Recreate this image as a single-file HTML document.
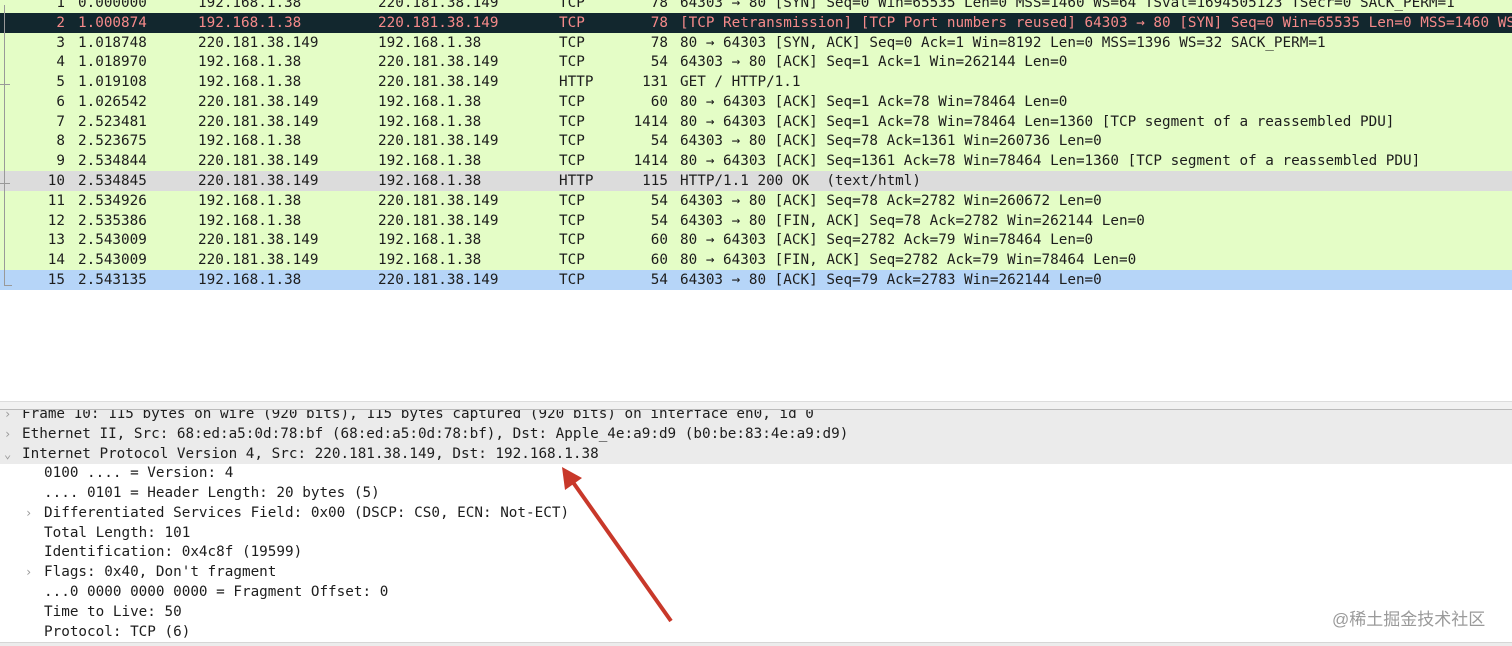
<!DOCTYPE html>
<html><head><meta charset="utf-8"><style>
*{margin:0;padding:0;box-sizing:border-box}
body{width:1512px;height:646px;overflow:hidden;background:#fff;font-family:"DejaVu Sans Mono","Liberation Mono",monospace;font-size:14.3px;color:#1d1d1d;position:relative}
.r{position:absolute;left:0;width:1512px;height:20px;line-height:21px;white-space:pre;background:#e4fdc6}
.r span{position:absolute;top:0}
.n{right:1447px;text-align:right}
.t{left:78px}.s{left:198px}.d{left:378px}.p{left:559px}.l{right:844px;text-align:right}.i{left:680px}
.blk{background:#12272e;color:#f58a8a}
.sel{background:#dcdcdc}
.blu{background:#b6d5f8}
.dr{position:absolute;left:0;width:1512px;height:20px;line-height:21px;white-space:pre}
.g{background:#ebebeb}
.ch{position:absolute;color:#999;font-size:12px}
</style></head><body>
<div class="r" style="top:-7px"><span class="n">1</span><span class="t">0.000000</span><span class="s">192.168.1.38</span><span class="d">220.181.38.149</span><span class="p">TCP</span><span class="l">78</span><span class="i">64303 → 80 [SYN] Seq=0 Win=65535 Len=0 MSS=1460 WS=64 TSval=1694505123 TSecr=0 SACK_PERM=1</span></div>
<div class="r blk" style="top:13px"><span class="n">2</span><span class="t">1.000874</span><span class="s">192.168.1.38</span><span class="d">220.181.38.149</span><span class="p">TCP</span><span class="l">78</span><span class="i">[TCP Retransmission] [TCP Port numbers reused] 64303 → 80 [SYN] Seq=0 Win=65535 Len=0 MSS=1460 WS=64</span></div>
<div class="r" style="top:33px"><span class="n">3</span><span class="t">1.018748</span><span class="s">220.181.38.149</span><span class="d">192.168.1.38</span><span class="p">TCP</span><span class="l">78</span><span class="i">80 → 64303 [SYN, ACK] Seq=0 Ack=1 Win=8192 Len=0 MSS=1396 WS=32 SACK_PERM=1</span></div>
<div class="r" style="top:52px"><span class="n">4</span><span class="t">1.018970</span><span class="s">192.168.1.38</span><span class="d">220.181.38.149</span><span class="p">TCP</span><span class="l">54</span><span class="i">64303 → 80 [ACK] Seq=1 Ack=1 Win=262144 Len=0</span></div>
<div class="r" style="top:72px"><span class="n">5</span><span class="t">1.019108</span><span class="s">192.168.1.38</span><span class="d">220.181.38.149</span><span class="p">HTTP</span><span class="l">131</span><span class="i">GET / HTTP/1.1</span></div>
<div class="r" style="top:92px"><span class="n">6</span><span class="t">1.026542</span><span class="s">220.181.38.149</span><span class="d">192.168.1.38</span><span class="p">TCP</span><span class="l">60</span><span class="i">80 → 64303 [ACK] Seq=1 Ack=78 Win=78464 Len=0</span></div>
<div class="r" style="top:112px"><span class="n">7</span><span class="t">2.523481</span><span class="s">220.181.38.149</span><span class="d">192.168.1.38</span><span class="p">TCP</span><span class="l">1414</span><span class="i">80 → 64303 [ACK] Seq=1 Ack=78 Win=78464 Len=1360 [TCP segment of a reassembled PDU]</span></div>
<div class="r" style="top:131px"><span class="n">8</span><span class="t">2.523675</span><span class="s">192.168.1.38</span><span class="d">220.181.38.149</span><span class="p">TCP</span><span class="l">54</span><span class="i">64303 → 80 [ACK] Seq=78 Ack=1361 Win=260736 Len=0</span></div>
<div class="r" style="top:151px"><span class="n">9</span><span class="t">2.534844</span><span class="s">220.181.38.149</span><span class="d">192.168.1.38</span><span class="p">TCP</span><span class="l">1414</span><span class="i">80 → 64303 [ACK] Seq=1361 Ack=78 Win=78464 Len=1360 [TCP segment of a reassembled PDU]</span></div>
<div class="r sel" style="top:171px"><span class="n">10</span><span class="t">2.534845</span><span class="s">220.181.38.149</span><span class="d">192.168.1.38</span><span class="p">HTTP</span><span class="l">115</span><span class="i">HTTP/1.1 200 OK  (text/html)</span></div>
<div class="r" style="top:191px"><span class="n">11</span><span class="t">2.534926</span><span class="s">192.168.1.38</span><span class="d">220.181.38.149</span><span class="p">TCP</span><span class="l">54</span><span class="i">64303 → 80 [ACK] Seq=78 Ack=2782 Win=260672 Len=0</span></div>
<div class="r" style="top:211px"><span class="n">12</span><span class="t">2.535386</span><span class="s">192.168.1.38</span><span class="d">220.181.38.149</span><span class="p">TCP</span><span class="l">54</span><span class="i">64303 → 80 [FIN, ACK] Seq=78 Ack=2782 Win=262144 Len=0</span></div>
<div class="r" style="top:230px"><span class="n">13</span><span class="t">2.543009</span><span class="s">220.181.38.149</span><span class="d">192.168.1.38</span><span class="p">TCP</span><span class="l">60</span><span class="i">80 → 64303 [ACK] Seq=2782 Ack=79 Win=78464 Len=0</span></div>
<div class="r" style="top:250px"><span class="n">14</span><span class="t">2.543009</span><span class="s">220.181.38.149</span><span class="d">192.168.1.38</span><span class="p">TCP</span><span class="l">60</span><span class="i">80 → 64303 [FIN, ACK] Seq=2782 Ack=79 Win=78464 Len=0</span></div>
<div class="r blu" style="top:270px"><span class="n">15</span><span class="t">2.543135</span><span class="s">192.168.1.38</span><span class="d">220.181.38.149</span><span class="p">TCP</span><span class="l">54</span><span class="i">64303 → 80 [ACK] Seq=79 Ack=2783 Win=262144 Len=0</span></div>
<div style="position:absolute;left:4px;top:5px;width:1px;height:281px;background:#999"></div>
<div style="position:absolute;left:4px;top:285px;width:8px;height:1px;background:#999"></div>
<div style="position:absolute;left:0;top:84px;width:10px;height:1px;background:#999"></div>
<div style="position:absolute;left:0;top:183px;width:10px;height:1px;background:#999"></div>

<div class="dr g" style="top:404px;height:20px"><span class="ch" style="left:4px">›</span><span style="position:absolute;left:22px">Frame 10: 115 bytes on wire (920 bits), 115 bytes captured (920 bits) on interface en0, id 0</span></div>
<div style="position:absolute;left:0;top:401px;width:1512px;height:9px;background:#f2f2f2;border-top:1px solid #ddd;border-bottom:1px solid #bbb"></div>
<div class="dr g" style="top:424px"><span class="ch" style="left:4px">›</span><span style="position:absolute;left:22px">Ethernet II, Src: 68:ed:a5:0d:78:bf (68:ed:a5:0d:78:bf), Dst: Apple_4e:a9:d9 (b0:be:83:4e:a9:d9)</span></div>
<div class="dr g" style="top:444px"><span class="ch" style="left:4px">⌄</span><span style="position:absolute;left:22px">Internet Protocol Version 4, Src: 220.181.38.149, Dst: 192.168.1.38</span></div>
<div class="dr" style="top:463px"><span style="position:absolute;left:44px">0100 .... = Version: 4</span></div>
<div class="dr" style="top:483px"><span style="position:absolute;left:44px">.... 0101 = Header Length: 20 bytes (5)</span></div>
<div class="dr" style="top:503px"><span class="ch" style="left:25px">›</span><span style="position:absolute;left:44px">Differentiated Services Field: 0x00 (DSCP: CS0, ECN: Not-ECT)</span></div>
<div class="dr" style="top:523px"><span style="position:absolute;left:44px">Total Length: 101</span></div>
<div class="dr" style="top:542px"><span style="position:absolute;left:44px">Identification: 0x4c8f (19599)</span></div>
<div class="dr" style="top:562px"><span class="ch" style="left:25px">›</span><span style="position:absolute;left:44px">Flags: 0x40, Don't fragment</span></div>
<div class="dr" style="top:582px"><span style="position:absolute;left:44px">...0 0000 0000 0000 = Fragment Offset: 0</span></div>
<div class="dr" style="top:602px"><span style="position:absolute;left:44px">Time to Live: 50</span></div>
<div class="dr" style="top:622px"><span style="position:absolute;left:44px">Protocol: TCP (6)</span></div>
<div style="position:absolute;left:0;top:642px;width:1512px;height:4px;background:#ececec;border-top:1px solid #d6d6d6"></div>
<div style="position:absolute;left:1332px;top:605px;font-family:'Liberation Sans','Noto Sans CJK SC',sans-serif;font-size:17px;color:#9a9a9a">@稀土掘金技术社区</div>
<svg style="position:absolute;left:0;top:0" width="1512" height="646"><line x1="671" y1="621" x2="570" y2="478" stroke="#c8382a" stroke-width="4"/><polygon points="562,467 582,478 565,490" fill="#c8382a"/></svg>
</body></html>
